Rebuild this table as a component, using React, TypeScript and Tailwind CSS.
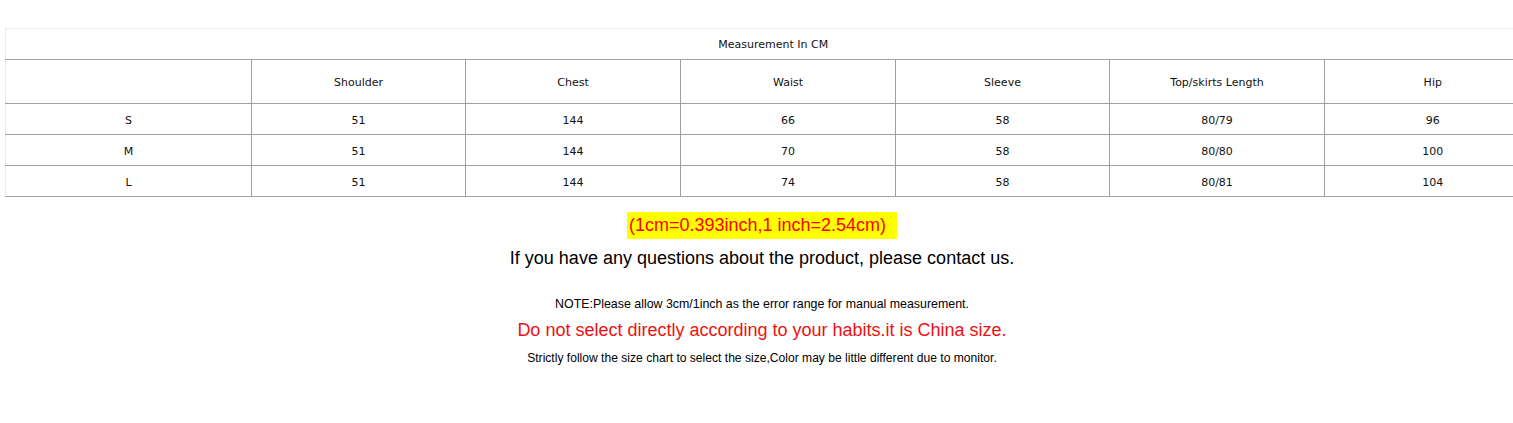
import React from "react";

const headers = ["", "Shoulder", "Chest", "Waist", "Sleeve", "Top/skirts Length", "Hip"];
const rows = [
  ["S", "51", "144", "66", "58", "80/79", "96"],
  ["M", "51", "144", "70", "58", "80/80", "100"],
  ["L", "51", "144", "74", "58", "80/81", "104"],
];
const widths = ["w-[246px]", "w-[214px]", "w-[215px]", "w-[215px]", "w-[214px]", "w-[215px]", "w-[216px]"];

export default function App() {
  return (
    <div className="w-[1513px] h-[423px] overflow-hidden bg-white">
      <div className="pt-[28px] pl-[5px]">
        <table
          className="border-collapse table-fixed w-[1535px] text-[11px] text-[#111]"
          style={{ fontFamily: '"DejaVu Sans", Verdana, sans-serif' }}
        >
          <colgroup>
            {widths.map((w, i) => (
              <col key={i} className={w} />
            ))}
          </colgroup>
          <tbody>
            <tr className="h-[31px]">
              <td
                colSpan={7}
                className="text-center align-middle border-t border-l border-t-[#ebebeb] border-l-[#ebebeb] border-b border-b-[#a0a0a0] p-0 pt-[2px]"
              >
                Measurement In CM
              </td>
            </tr>
            <tr className="h-[44px]">
              {headers.map((h, i) => (
                <td
                  key={i}
                  className={
                    "text-center align-middle p-0 pt-[4px] border-b border-b-[#a0a0a0] border-l " +
                    (i === 0 ? "border-l-[#ebebeb]" : "border-l-[#a0a0a0]")
                  }
                >
                  {h}
                </td>
              ))}
            </tr>
            {rows.map((r, ri) => (
              <tr key={ri} className="h-[31px]">
                {r.map((c, i) => (
                  <td
                    key={i}
                    className={
                      "text-center align-middle p-0 pt-[4px] border-b border-b-[#a0a0a0] border-l " +
                      (i === 0 ? "border-l-[#ebebeb]" : "border-l-[#a0a0a0]")
                    }
                  >
                    {c}
                  </td>
                ))}
              </tr>
            ))}
          </tbody>
        </table>
      </div>
      <div
        className="pl-[11px] text-center"
        style={{ fontFamily: '"Liberation Sans", Arial, sans-serif' }}
      >
        <div className="mt-[15px] h-[27px] flex justify-center items-center">
          <span className="bg-[#ffff00] text-[#ff0000] text-[18px] leading-[27px] pl-[2px] pr-[11px]">
            (1cm=0.393inch,1 inch=2.54cm)
          </span>
        </div>
        <div className="mt-[8px] text-[18px] leading-[22px] text-black">
          If you have any questions about the product, please contact us.
        </div>
        <div className="mt-[28px] text-[12.4px] leading-[14px] text-black">
          NOTE:Please allow 3cm/1inch as the error range for manual measurement.
        </div>
        <div className="mt-[7px] text-[18px] leading-[24px] text-[#ee1111]">
          Do not select directly according to your habits.it is China size.
        </div>
        <div className="mt-[9px] text-[12.1px] leading-[14px] text-black">
          Strictly follow the size chart to select the size,Color may be little different due to monitor.
        </div>
      </div>
    </div>
  );
}
